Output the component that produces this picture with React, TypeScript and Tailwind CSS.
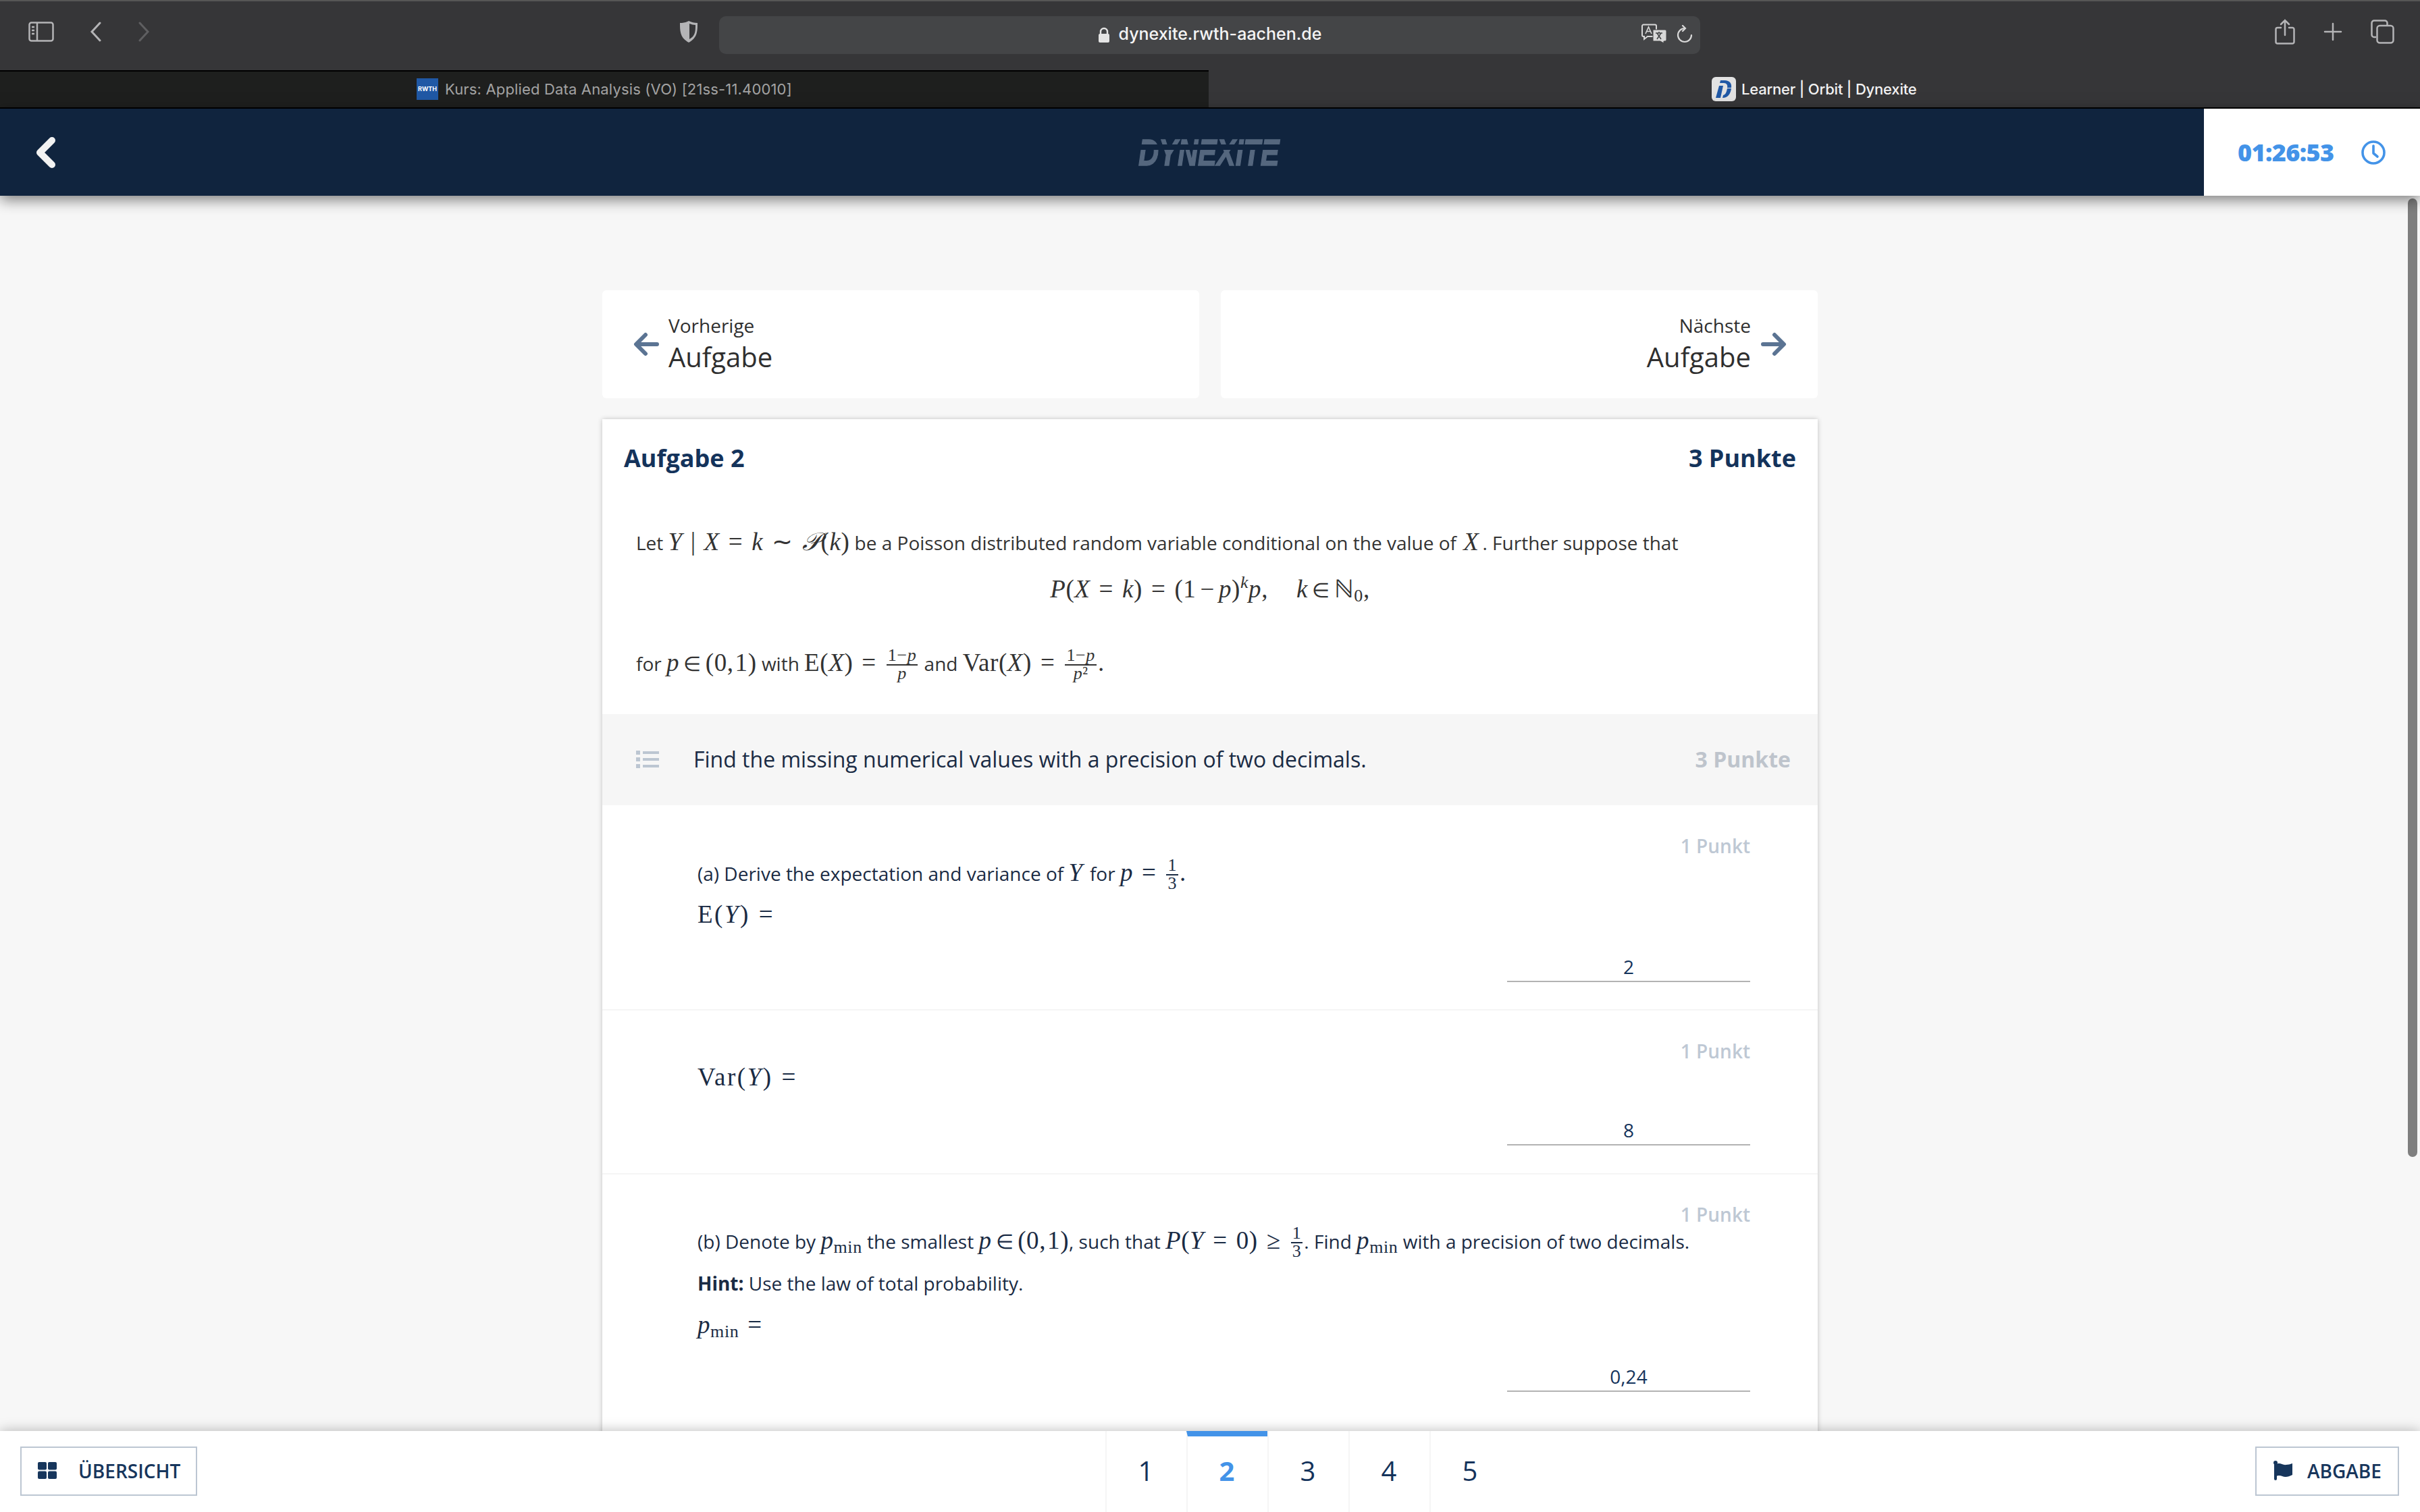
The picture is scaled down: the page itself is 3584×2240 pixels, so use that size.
import type { ReactNode } from 'react';

const sans = { fontFamily: '"Open Sans", sans-serif' };

// math helpers, the original page uses KaTeX
function M({ children }: { children: ReactNode }) {
  return <span className="font-['Liberation_Serif',serif] text-[37px] tracking-[0.6px] whitespace-nowrap">{children}</span>;
}
function V({ children }: { children: ReactNode }) {
  return <i>{children}</i>;
}
function Rel({ children }: { children: ReactNode }) {
  return <span className="mx-[13px]">{children}</span>;
}
function In() {
  return <span className="mx-[6px] text-[30px]">∈</span>;
}
function Interval() {
  return (
    <span>
      (0,<span className="ml-[2px]" />1)
    </span>
  );
}
function Frac({ top, bottom }: { top: ReactNode; bottom: ReactNode }) {
  return (
    <span className="inline-flex flex-col items-center align-middle text-[26px] leading-[22px] mx-[2px] -mt-[2px]">
      <span className="px-[2px] pb-[2px]">{top}</span>
      <span className="self-stretch text-center border-t-2 border-current px-[2px] pt-[1px]">{bottom}</span>
    </span>
  );
}
function PMin() {
  return (
    <span>
      <V>p</V>
      <sub className="text-[26px] not-italic bottom-[-6px]">min</sub>
    </span>
  );
}

function Answer({ value, className }: { value: string; className: string }) {
  return (
    <div className={`flex justify-end ${className}`}>
      <input
        readOnly
        value={value}
        className="w-[360px] h-[45px] border-b-2 border-[#b3b3b3] text-center text-[28px] text-[#14335b] outline-none bg-transparent"
      />
    </div>
  );
}

function PointLabel() {
  return <div className="h-[40px] leading-[40px] text-right text-[28px] font-semibold text-[#bec8d4]">1 Punkt</div>;
}

function BrowserChrome() {
  return (
    <div className="shrink-0 font-['Inter',sans-serif]">
      <div className="h-[104px] bg-[#363638] border-t-2 border-[#565656] flex">
        <div className="w-[1065px] flex items-center pl-[42px] pb-[12px]">
          <svg width="38" height="30" viewBox="0 0 38 30" fill="none" stroke="#b4b4b6" strokeWidth="2.5">
            <rect x="1.5" y="1.5" width="35" height="27" rx="3" />
            <path d="M13 2v26" />
            <path d="M5 8h4M5 13h4M5 18h4" />
          </svg>
          <svg className="ml-[53px]" width="18" height="30" viewBox="0 0 18 30" fill="none" stroke="#b4b4b6" strokeWidth="3" strokeLinecap="round">
            <path d="M15 2 3 15l12 13" />
          </svg>
          <svg className="ml-[53px]" width="18" height="30" viewBox="0 0 18 30" fill="none" stroke="#5f5f61" strokeWidth="3" strokeLinecap="round">
            <path d="M3 2l12 13L3 28" />
          </svg>
          <svg className="ml-auto mr-[31px]" width="28" height="34" viewBox="0 0 28 34">
            <path d="M14 1c4 2 8 3 13 3 0 12 0 22-13 29C1 26 1 16 1 4c5 0 9-1 13-3Z" fill="#b4b4b6" />
            <path d="M15 5c3 1 6 2 9 2 0 9 0 16-9 21Z" fill="#363638" />
          </svg>
        </div>
        <div className="relative mt-[22px] w-[1453px] h-[56px] rounded-[10px] bg-[#444547] flex items-center justify-center gap-[13px]">
          <svg width="18" height="24" viewBox="0 0 18 24">
            <path d="M4 11V7a5 5 0 0 1 10 0v4" fill="none" stroke="#e4e4e4" strokeWidth="2.4" />
            <rect x="1" y="10" width="16" height="13" rx="2" fill="#e4e4e4" />
          </svg>
          <span className="text-[25px] font-medium text-[#f4f4f4] -mt-[2px]">dynexite.rwth-aachen.de</span>
          <svg className="absolute left-[1366px] top-[11px]" width="38" height="30" viewBox="0 0 38 30" fill="none">
            <path d="M3 1.500h17a2 2 0 0 1 2 2V19H9l-5 4v-4H3a2 2 0 0 1-2-2V3.500a2 2 0 0 1 2-2Z" stroke="#d8d8d8" strokeWidth="2" />
            <path d="M6 15 10.500 5 15 15M7.500 11.500h6" stroke="#d8d8d8" strokeWidth="1.600" />
            <path d="M17 9h18a2 2 0 0 1 2 2v13a2 2 0 0 1-2 2h-2v3l-5-3H17Z" fill="#d8d8d8" stroke="#444547" strokeWidth="1" />
            <path d="M21 14h10M26 12v2M23 23l6-9M29 23l-6-9" stroke="#444547" strokeWidth="1.600" />
          </svg>
          <svg className="absolute left-[1417px] top-[13px]" width="26" height="28" viewBox="0 0 26 28" fill="none" stroke="#d8d8d8" strokeWidth="2.2" strokeLinecap="round">
            <path d="M13 5a10 10 0 1 0 10 10" />
            <path d="m10 1 4 4-4 4" />
          </svg>
        </div>
        <div className="flex-1 flex items-center justify-end pr-[38px] pb-[12px]">
          <svg width="30" height="38" viewBox="0 0 30 38" fill="none" stroke="#b4b4b6" strokeWidth="2.5" strokeLinecap="round">
            <path d="M9 13H4a2.500 2.500 0 0 0-2.500 2.500V34A2.500 2.500 0 0 0 4 36.500h22a2.500 2.500 0 0 0 2.500-2.500V15.500A2.500 2.500 0 0 0 26 13h-5" />
            <path d="M15 24V2M9 8l6-6 6 6" />
          </svg>
          <svg className="ml-[42px]" width="28" height="28" viewBox="0 0 28 28" stroke="#b4b4b6" strokeWidth="2.500" strokeLinecap="round">
            <path d="M14 2v24M2 14h24" />
          </svg>
          <svg className="ml-[42px]" width="35" height="36" viewBox="0 0 35 36" fill="none" stroke="#b4b4b6" strokeWidth="2.500">
            <path d="M8 26H5a3.500 3.500 0 0 1-3.500-3.500V5A3.500 3.500 0 0 1 5 1.500h16A3.500 3.500 0 0 1 24.500 5v3" />
            <rect x="9.500" y="9" width="24" height="25.500" rx="4" />
          </svg>
        </div>
      </div>
      <div className="h-[57px] flex border-b-2 border-black">
        <div className="w-[1790px] bg-[#1e1f1e] border-t-2 border-black flex items-center pl-[617px] pb-[2px]">
          <span className="w-[32px] h-[32px] bg-[#2058a5] flex items-center justify-center text-[9px] font-bold text-white">RWTH</span>
          <span className="ml-[10px] mt-[2px] text-[22px] tracking-[0.16px] text-[#a3a3a3]">Kurs: Applied Data Analysis (VO) [21ss-11.40010]</span>
        </div>
        <div className="flex-1 bg-[#363638] flex items-center pl-[745px]">
          <span className="w-[36px] h-[36px] rounded-[6px] bg-[#e2e2e2] flex items-center justify-center">
            <svg width="28" height="28" viewBox="0 0 28 28">
              <path d="M9 1h6c8 0 11 5 10 11h-6c1-4-1-7-5-7H8Z" fill="#2058a5" />
              <path d="M7 9h6l-4 18H2ZM19 13h6c-1 8-5 14-13 14l1-4c4-1 5-5 6-10Z" fill="#2058a5" />
            </svg>
          </span>
          <span className="ml-[8px] mt-[2px] text-[22px] tracking-[-0.2px] font-medium text-[#f2f2f2]">Learner | Orbit | Dynexite</span>
        </div>
      </div>
    </div>
  );
}

function AppHeader() {
  return (
    <header className="relative z-20 shrink-0 h-[129px] bg-[#10243e] flex items-center shadow-[0_6px_20px_rgba(0,0,0,0.5)]">
      <svg className="ml-[52px]" width="32" height="46" viewBox="0 0 32 46" fill="none" stroke="#f2f2f2" strokeWidth="10" strokeLinecap="round" strokeLinejoin="round">
        <path d="M25 5 7 23l18 18" />
      </svg>
      <div className="absolute left-[1686px] top-[44px] w-[212px] h-[41px]">
        <span className="block origin-left scale-x-[0.745] font-['Liberation_Sans',sans-serif] font-bold italic text-[56px] leading-[41px] text-[#55677e] [-webkit-text-stroke:1.5px_#55677e] whitespace-nowrap">
          DYNEXITE
        </span>
        <div className="absolute left-0 right-0 top-[9px] h-[8px] bg-[#10243e]" />
      </div>
      <div className="ml-auto w-[320px] h-full bg-white flex items-center pl-[50px]" style={sans}>
        <span className="text-[36px] font-extrabold text-[#4393e8] tracking-[-0.6px]">01:26:53</span>
        <svg className="ml-[40px]" width="36" height="36" viewBox="0 0 36 36" fill="none" stroke="#4393e8" strokeWidth="3.600" strokeLinecap="round" strokeLinejoin="round">
          <circle cx="18" cy="18" r="16" />
          <path d="M18 8v11l6 5" />
        </svg>
      </div>
    </header>
  );
}

function BottomBar() {
  return (
    <footer className="relative z-20 shrink-0 h-[120px] bg-white flex items-start shadow-[0_0_18px_rgba(0,0,0,0.28)]" style={sans}>
      <button className="ml-[30px] mt-[23px] w-[262px] h-[73px] border-2 border-[#bcc6d2] flex items-center pl-[24px] pb-[2px] text-[28px] font-semibold text-[#17365c]">
        <svg width="28" height="25" viewBox="0 0 28 25" fill="#17365c">
          <rect x="0" y="0" width="13" height="11.500" rx="2" />
          <rect x="15" y="0" width="13" height="11.500" rx="2" />
          <rect x="0" y="13.500" width="13" height="11.500" rx="2" />
          <rect x="15" y="13.500" width="13" height="11.500" rx="2" />
        </svg>
        <span className="ml-[32px]">ÜBERSICHT</span>
      </button>
      <nav className="ml-[1345px] flex h-full text-[40px] text-[#14335b]">
        {[1, 2, 3, 4, 5].map((n) => (
          <div
            key={n}
            className={`w-[120px] h-full flex items-center justify-center border-l-2 border-[#f5f5f5] pr-[2px] ${n === 2 ? 'border-t-[8px] border-t-[#4393e8] text-[#4393e8] font-bold pb-[10px]' : 'pb-[2px]'}`}
          >
            {n}
          </div>
        ))}
      </nav>
      <button className="ml-auto mr-[31px] mt-[23px] w-[213px] h-[73px] border-2 border-[#bcc6d2] flex items-center pl-[25px] pb-[2px] text-[28px] font-semibold text-[#17365c]">
        <svg width="28" height="29" viewBox="0 0 28 29" fill="#17365c">
          <circle cx="3" cy="3" r="3" />
          <rect x="1" y="2" width="4" height="27" rx="2" />
          <path d="M4 5c6-3 9 2 15 1 3 0 6-1 9-2v17c-4 2-7 3-10 3-5 0-8-4-14-1Z" />
        </svg>
        <span className="ml-[22px]">ABGABE</span>
      </button>
    </footer>
  );
}

export default function App() {
  return (
    <div className="w-[3584px] h-[2240px] overflow-hidden flex flex-col bg-[#f7f7f7]" style={sans}>
      <BrowserChrome />
      <AppHeader />

      <main className="relative flex-1 overflow-hidden pt-[140px] flex flex-col items-center">
        {/* scroll bar */}
        <div className="absolute right-[4px] top-[4px] w-[14px] h-[1420px] rounded-full bg-[#7f7f7f]" />

        <div className="w-[1800px] flex gap-[32px] shrink-0">
          <a className="flex-1 h-[160px] bg-white rounded-[6px] flex items-center pl-[46px] text-[#2f2f2f]">
            <svg width="38" height="36" viewBox="0 0 38 36" fill="none" stroke="#5b7493" strokeWidth="6" strokeLinecap="round" strokeLinejoin="round">
              <path d="M35 18H5M18 4 4 18l14 14" />
            </svg>
            <div className="ml-[14px] -mt-[6px]">
              <div className="text-[28px] leading-[44px]">Vorherige</div>
              <div className="text-[40px] leading-[50px]">Aufgabe</div>
            </div>
          </a>
          <a className="flex-1 h-[160px] bg-white rounded-[6px] flex items-center justify-end pr-[46px] text-[#2f2f2f]">
            <div className="mr-[15px] -mt-[6px] text-right">
              <div className="text-[28px] leading-[44px]">Nächste</div>
              <div className="text-[40px] leading-[50px]">Aufgabe</div>
            </div>
            <svg width="38" height="36" viewBox="0 0 38 36" fill="none" stroke="#5b7493" strokeWidth="6" strokeLinecap="round" strokeLinejoin="round">
              <path d="M3 18h30M20 4l14 14-14 14" />
            </svg>
          </a>
        </div>

        <section className="mt-[31px] w-[1800px] shrink-0 bg-white shadow-[0_0_7px_rgba(0,0,0,0.22)]">
          <div className="h-[116px] px-[32px] flex items-center justify-between text-[36px] font-bold text-[#14335b]">
            <span>Aufgabe 2</span>
            <span>3 Punkte</span>
          </div>

          <div className="px-[50px] text-[28px] text-[#333]">
            <div className="mt-[36px] h-[60px] flex items-center">
              <span className="whitespace-pre">
                Let{' '}
                <M>
                  <V>Y</V> <span className="mx-[2px]">|</span> <V>X</V>
                  <Rel>=</Rel>
                  <V>k</V>
                  <Rel>∼</Rel>
                  <V>𝒫</V>(<V>k</V>)
                </M>{' '}
                be a Poisson distributed random variable conditional on the value of{' '}
                <M>
                  <span className="mx-[3px]">
                    <V>X</V>
                  </span>
                </M>
                <span className="ml-[2px]">. Further suppose that</span>
              </span>
            </div>
            <div className="mt-[10px] h-[60px] flex items-center justify-center">
              <M>
                <V>P</V>(<V>X</V>
                <Rel>=</Rel>
                <V>k</V>)<Rel>=</Rel>(1<span className="mx-[6px]">−</span>
                <V>p</V>)<sup className="text-[26px] italic top-[-14px]">k</sup>
                <V>p</V>,<span className="ml-[42px]" />
                <V>k</V>
                <In />ℕ<sub className="text-[26px] bottom-[-6px]">0</sub>,
              </M>
            </div>
            <div className="mt-[44px] h-[70px] flex items-center">
              <span className="whitespace-pre">
                for{' '}
                <M>
                  <V>p</V>
                  <In />
                  <Interval />
                </M>{' '}
                with{' '}
                <M>
                  E(<V>X</V>)<Rel>=</Rel>
                  <Frac
                    top={
                      <>
                        1−<V>p</V>
                      </>
                    }
                    bottom={<V>p</V>}
                  />
                </M>{' '}
                and{' '}
                <M>
                  Var(<V>X</V>)<Rel>=</Rel>
                  <Frac
                    top={
                      <>
                        1−<V>p</V>
                      </>
                    }
                    bottom={
                      <>
                        <V>p</V>²
                      </>
                    }
                  />
                  .
                </M>
              </span>
            </div>
          </div>

          <div className="mt-[41px] h-[135px] bg-[#f6f6f6] flex items-center pl-[50px] pr-[40px] pb-[2px]">
            <svg width="34" height="26" viewBox="0 0 34 26" fill="#bcc6d2">
              <rect x="0" y="0" width="6" height="6" />
              <rect x="10" y="1" width="24" height="4" />
              <rect x="0" y="10" width="6" height="6" />
              <rect x="10" y="11" width="24" height="4" />
              <rect x="0" y="20" width="6" height="6" />
              <rect x="10" y="21" width="24" height="4" />
            </svg>
            <span className="ml-[51px] text-[32px] text-[#1a2b44]">Find the missing numerical values with a precision of two decimals.</span>
            <span className="ml-auto text-[32px] font-bold text-[#bec4cc]">3 Punkte</span>
          </div>

          <div className="h-[304px] pt-[40px] pl-[141px] pr-[100px] border-b-2 border-[#f5f5f5] text-[28px] text-[#1a2b44]">
            <PointLabel />
            <div className="h-[40px] flex items-center">
              <span className="whitespace-pre">
                (a) Derive the expectation and variance of{' '}
                <M>
                  <span className="mr-[3px]">
                    <V>Y</V>
                  </span>
                </M>{' '}
                for{' '}
                <M>
                  <V>p</V>
                  <Rel>=</Rel>
                  <Frac top="1" bottom="3" />.
                </M>
              </span>
            </div>
            <div className="mt-[20px] h-[44px] flex items-center">
              <M>
                <span className="tracking-[2.5px]">
                  E(<V>Y</V>)<Rel>=</Rel>
                </span>
              </M>
            </div>
            <Answer value="2" className="mt-[33px]" />
          </div>

          <div className="h-[243px] pt-[40px] pl-[141px] pr-[100px] border-b-2 border-[#f5f5f5] text-[28px] text-[#1a2b44]">
            <PointLabel />
            <div className="h-[38px] flex items-center">
              <M>
                <span className="tracking-[2.5px]">
                  Var(<V>Y</V>)<Rel>=</Rel>
                </span>
              </M>
            </div>
            <Answer value="8" className="mt-[37px]" />
          </div>

          <div className="h-[480px] pt-[39px] pl-[141px] pr-[100px] text-[28px] text-[#1a2b44]">
            <PointLabel />
            <div className="-mt-[1px] h-[40px] flex items-center">
              <span className="whitespace-pre">
                (b) Denote by{' '}
                <M>
                  <PMin />
                </M>{' '}
                the smallest{' '}
                <M>
                  <V>p</V>
                  <In />
                  <Interval />
                </M>
                , such that{' '}
                <M>
                  <V>P</V>(<V>Y</V>
                  <Rel>=</Rel>0)<Rel>≥</Rel>
                  <Frac top="1" bottom="3" />
                </M>
                . Find{' '}
                <M>
                  <PMin />
                </M>{' '}
                with a precision of two decimals.
              </span>
            </div>
            <div className="mt-[23px] h-[40px] flex items-center">
              <span>
                <b>Hint:</b> Use the law of total probability.
              </span>
            </div>
            <div className="mt-[22px] h-[40px] flex items-center">
              <M>
                <PMin />
                <Rel>=</Rel>
              </M>
            </div>
            <Answer value="0,24" className="mt-[34px]" />
          </div>
        </section>
      </main>

      <BottomBar />
    </div>
  );
}
